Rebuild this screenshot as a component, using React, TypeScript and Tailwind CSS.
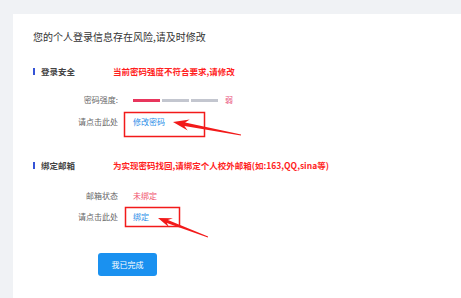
import React from "react";

type Pt = [number, number];

// annotation arrow: tapered shaft + head, drawn from tail to tip
function arrowPoints(tail: Pt, tip: Pt, headLen: number, headHalf: number, shaftHalf: number) {
  const dx = tip[0] - tail[0];
  const dy = tip[1] - tail[1];
  const len = Math.hypot(dx, dy);
  const ux = dx / len;
  const uy = dy / len;
  const px = -uy;
  const py = ux;
  const bx = tip[0] - ux * headLen;
  const by = tip[1] - uy * headLen;
  const nx = tip[0] - ux * (headLen - 4);
  const ny = tip[1] - uy * (headLen - 4);
  const pts: Pt[] = [
    tip,
    [bx + px * headHalf, by + py * headHalf],
    [nx + px * shaftHalf, ny + py * shaftHalf],
    [tail[0] + px * 0.4, tail[1] + py * 0.4],
    [tail[0] - px * 0.4, tail[1] - py * 0.4],
    [nx - px * shaftHalf, ny - py * shaftHalf],
    [bx - px * headHalf, by - py * headHalf],
  ];
  return pts.map((p) => `${p[0].toFixed(1)},${p[1].toFixed(1)}`).join(" ");
}

const FONT = { fontFamily: '"Noto Sans CJK SC", "Noto Sans", sans-serif' };

function SectionHeader({ title, note }: { title: string; note: string }) {
  return (
    <div className="flex items-center h-[12px]">
      <div className="w-[80px] flex items-center gap-[6px]">
        <span className="w-[2px] h-[7px] bg-[#3553d6]" />
        <span className="text-[8.5px] font-bold text-[#444] leading-none">{title}</span>
      </div>
      <span className="text-[8.5px] font-bold text-[#ff1f1f] leading-none">{note}</span>
    </div>
  );
}

function Row({ label, children }: { label: string; children: React.ReactNode }) {
  return (
    <div className="flex items-center h-[12px]">
      <div className="w-[85px] text-right text-[8px] text-[#666] leading-none">{label}</div>
      <div className="ml-[15px] flex items-center">{children}</div>
    </div>
  );
}

export default function App() {
  return (
    <div className="relative w-[461px] h-[298px] bg-[#f0f2f5] overflow-hidden" style={FONT}>
      <div className="ml-[13px] mt-[14px] h-[284px] bg-white pl-[20px] pt-[16px] flex flex-col">
        <h1 className="text-[10px] text-[#333] leading-[14px]">您的个人登录信息存在风险,请及时修改</h1>

        <div className="mt-[21px]">
          <SectionHeader title="登录安全" note="当前密码强度不符合要求,请修改" />
        </div>

        <div className="mt-[17px] flex flex-col gap-[10px]">
          <Row label="密码强度:">
            <div className="flex items-center gap-[2px]">
              <span className="w-[27px] h-[3px] bg-[#e8365d]" />
              <span className="w-[27px] h-[3px] bg-[#c3c6cf]" />
              <span className="w-[27px] h-[3px] bg-[#c3c6cf]" />
            </div>
            <span className="ml-[7px] text-[8px] text-[#ea5a82] leading-none">弱</span>
          </Row>
          <Row label="请点击此处">
            <span className="text-[8px] text-[#2b8ee8] leading-none">修改密码</span>
          </Row>
        </div>

        <div className="mt-[31px]">
          <SectionHeader title="绑定邮箱" note="为实现密码找回,请绑定个人校外邮箱(如:163,QQ,sina等)" />
        </div>

        <div className="mt-[19px] flex flex-col gap-[9px]">
          <Row label="邮箱状态">
            <span className="text-[8px] text-[#f0506e] leading-none">未绑定</span>
          </Row>
          <Row label="请点击此处">
            <span className="text-[8px] text-[#2b8ee8] leading-none">绑定</span>
          </Row>
        </div>

        <button className="mt-[30px] ml-[65px] w-[59px] h-[23px] rounded-[3px] bg-[#1a91f0] text-white text-[8px] leading-none">
          我已完成
        </button>
      </div>

      {/* annotations drawn over the page */}
      <svg className="absolute inset-0 pointer-events-none" width="461" height="298">
        <rect x="124.5" y="112.5" width="80" height="24" fill="none" stroke="#f21a1a" strokeWidth="1.5" />
        <rect x="125.5" y="207.5" width="54" height="19" fill="none" stroke="#f21a1a" strokeWidth="1.5" />
        <polygon points={arrowPoints([241, 135], [173, 122], 16, 5.5, 1.8)} fill="#f21a1a" />
        <polygon points={arrowPoints([208, 237], [158, 218], 14, 5, 1.6)} fill="#f21a1a" />
      </svg>
    </div>
  );
}
